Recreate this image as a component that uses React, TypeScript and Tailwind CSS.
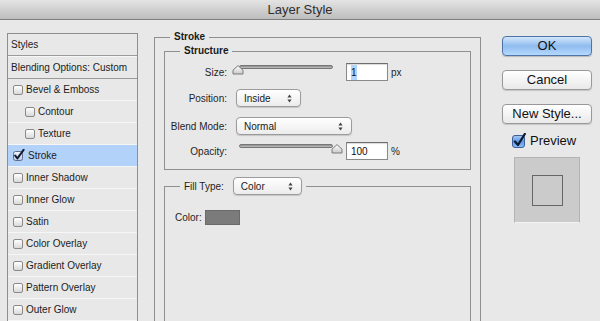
import type { ReactNode } from 'react';

const styleRows = [
  { label: 'Bevel & Emboss', indent: false, checked: false },
  { label: 'Contour', indent: true, checked: false },
  { label: 'Texture', indent: true, checked: false },
  { label: 'Stroke', indent: false, checked: true },
  { label: 'Inner Shadow', indent: false, checked: false },
  { label: 'Inner Glow', indent: false, checked: false },
  { label: 'Satin', indent: false, checked: false },
  { label: 'Color Overlay', indent: false, checked: false },
  { label: 'Gradient Overlay', indent: false, checked: false },
  { label: 'Pattern Overlay', indent: false, checked: false },
  { label: 'Outer Glow', indent: false, checked: false },
];

const SmallCheck = ({ checked }: { checked: boolean }) =>
  checked ? (
    <svg width="12" height="12" viewBox="0 0 12 12" className="-mt-[2px] shrink-0">
      <defs>
        <linearGradient id="sc" x1="0" y1="0" x2="0" y2="1">
          <stop offset="0" stopColor="#f4f8ff" />
          <stop offset="1" stopColor="#b9c9e4" />
        </linearGradient>
      </defs>
      <rect x="0.5" y="2.5" width="9" height="9" rx="2" fill="url(#sc)" stroke="#5d6d8c" />
      <path d="M2.2 6.6 L4.4 9.4 L10.6 0.8" fill="none" stroke="#141b33" strokeWidth="2" strokeLinecap="round" strokeLinejoin="round" />
    </svg>
  ) : (
    <div className="h-[10px] w-[10px] shrink-0 rounded-[2px] border border-[#8a8a8a] bg-gradient-to-b from-white to-[#d9d9d9]" />
  );

const UpDown = () => (
  <svg width="5" height="9" viewBox="0 0 5 9" className="shrink-0">
    <path d="M2.5 0.5 L4.6 3.4 L0.4 3.4 Z" fill="#444" />
    <path d="M2.5 8.5 L4.6 5.6 L0.4 5.6 Z" fill="#444" />
  </svg>
);

const Select = ({ value, width }: { value: string; width: string }) => (
  <div
    className={`flex h-[18px] ${width} items-center justify-between rounded-[4px] border border-[#9b9b9b] bg-gradient-to-b from-white to-[#ececec] pr-[8px] pl-[7px] text-[10px] text-[#1a1a1a] shadow-[0_1px_1px_rgba(0,0,0,0.15)]`}
  >
    <span>{value}</span>
    <UpDown />
  </div>
);

const Thumb = () => (
  <svg width="12" height="10" viewBox="0 0 12 10">
    <defs>
      <linearGradient id="th" x1="0" y1="0" x2="0" y2="1">
        <stop offset="0" stopColor="#ffffff" />
        <stop offset="1" stopColor="#c9c9c9" />
      </linearGradient>
    </defs>
    <path d="M1 9 L1 5.2 L6 0.6 L11 5.2 L11 9 Z" fill="url(#th)" stroke="#7a7a7a" strokeLinejoin="round" />
  </svg>
);

const Slider = ({ at }: { at: 'start' | 'end' }) => (
  <div className="relative mt-[-5px] ml-[5px] h-[10px] w-[112px] shrink-0">
    <div className="absolute top-[0px] left-[7px] h-[4px] w-[94px] rounded-full border border-[#777] bg-gradient-to-b from-[#8a8a8a] to-[#c4c4c4]" />
    <div className={`absolute top-[0px] ${at === 'start' ? 'left-0' : 'left-[99px]'}`}>
      <Thumb />
    </div>
  </div>
);

const NumberBox = ({ children }: { children: ReactNode }) => (
  <div className="ml-[2px] flex h-[18px] w-[42px] items-center border border-[#8a8a8a] border-t-[#6e6e6e] bg-white pl-[4px] text-[10px] text-[#111] shadow-[inset_0_1px_1px_rgba(0,0,0,0.15)]">
    {children}
  </div>
);

const Label = ({ children }: { children: ReactNode }) => (
  <span className="w-[62px] shrink-0 text-right text-[10px] text-[#1e1e1e]">{children}</span>
);

const Button = ({ children, primary }: { children: ReactNode; primary?: boolean }) => (
  <div
    className={
      primary
        ? 'flex h-[20px] items-center justify-center rounded-[4px] border border-[#4e74aa] bg-gradient-to-b from-[#d3e6fb] via-[#8fbcef] to-[#b5d9fd] text-[13px] text-[#111] shadow-[0_1px_1px_rgba(0,0,0,0.2)]'
        : 'flex h-[20px] items-center justify-center rounded-[4px] border border-[#999] bg-gradient-to-b from-white to-[#e9e9e9] text-[13px] text-[#111] shadow-[0_1px_1px_rgba(0,0,0,0.15)]'
    }
  >
    {children}
  </div>
);

export default function App() {
  return (
    <div className="flex h-[321px] w-[600px] flex-col overflow-hidden bg-[#e8e8e8] font-['Liberation_Sans',Arial,sans-serif]">
      <div className="flex h-[20px] shrink-0 items-center justify-center border-b border-[#7e7e7e] bg-gradient-to-b from-[#e4e4e4] to-[#bdbdbd] text-[13px] text-[#2e2e2e]">
        Layer Style
      </div>

      <div className="flex flex-1">
        <div className="mt-[13px] ml-[7px] w-[131px] self-start border border-[#8e8e8e] bg-[#e8e8e8] text-[10px] text-[#1c1c1c]">
          <div className="flex h-[22px] items-center border-b border-[#9a9a9a] pl-[3px]">Styles</div>
          <div className="flex h-[23px] items-center border-t border-b border-t-[#f7f7f7] border-b-[#9a9a9a] pl-[3px]">
            Blending Options: Custom
          </div>
          {styleRows.map((row) => (
            <div
              key={row.label}
              className={`flex h-[22px] items-center gap-[3px] border-b border-[#f6f6f6] ${row.indent ? 'pl-[17px]' : 'pl-[5px]'} ${row.checked ? 'bg-[#b3d2fa]' : ''}`}
            >
              <SmallCheck checked={row.checked} />
              <span>{row.label}</span>
            </div>
          ))}
        </div>

        <fieldset className="mt-[11px] ml-[16px] h-[400px] w-[327px] shrink-0 border border-[#8f8f8f] px-[9px]">
          <legend className="ml-[6px] px-[4px] text-[10px] leading-[12px] font-bold text-[#1a1a1a]">Stroke</legend>

          <fieldset className="mt-[2px] border border-[#8f8f8f] pb-[9px]">
            <legend className="ml-[15px] px-[4px] text-[10px] leading-[12px] font-bold text-[#1a1a1a]">Structure</legend>

            <div className="mt-[6px] flex h-[18px] items-center">
              <Label>Size:</Label>
              <Slider at="start" />
              <NumberBox>
                <span className="bg-[#b3d4fc]">1</span>
              </NumberBox>
              <span className="ml-[3px] text-[10px] text-[#1e1e1e]">px</span>
            </div>

            <div className="mt-[8px] flex h-[18px] items-center">
              <Label>Position:</Label>
              <div className="ml-[9px]">
                <Select value="Inside" width="w-[65px]" />
              </div>
            </div>

            <div className="mt-[10px] flex h-[18px] items-center">
              <Label>Blend Mode:</Label>
              <div className="ml-[9px]">
                <Select value="Normal" width="w-[116px]" />
              </div>
            </div>

            <div className="mt-[7px] flex h-[18px] items-center">
              <Label>Opacity:</Label>
              <Slider at="end" />
              <NumberBox>100</NumberBox>
              <span className="ml-[3px] text-[10px] text-[#1e1e1e]">%</span>
            </div>
          </fieldset>

          <fieldset className="mt-[7px] h-[200px] border border-[#8f8f8f] pl-[10px]">
            <legend className="ml-[5px] px-[4px]">
              <span className="flex items-center text-[10px] text-[#1e1e1e]">
                Fill Type:
                <span className="ml-[9px]">
                  <Select value="Color" width="w-[69px]" />
                </span>
              </span>
            </legend>
            <div className="mt-[15px] flex items-center text-[10px] text-[#1e1e1e]">
              Color:
              <div className="ml-[3px] h-[15px] w-[35px] border border-[#6a6a6a] bg-[#7b7b7b]" />
            </div>
          </fieldset>
        </fieldset>

        <div className="mt-[16px] ml-[21px] flex w-[90px] shrink-0 flex-col self-start">
          <Button primary>OK</Button>
          <div className="mt-[14px]">
            <Button>Cancel</Button>
          </div>
          <div className="mt-[14px]">
            <Button>New Style...</Button>
          </div>
          <div className="mt-[9px] flex h-[15px] items-center pl-[10px]">
            <svg width="14" height="15" viewBox="0 0 14 15" className="shrink-0">
              <defs>
                <linearGradient id="pv" x1="0" y1="0" x2="0" y2="1">
                  <stop offset="0" stopColor="#a9cbf3" />
                  <stop offset="0.5" stopColor="#5d99e6" />
                  <stop offset="1" stopColor="#8cc0fa" />
                </linearGradient>
              </defs>
              <rect x="0.5" y="2.5" width="12" height="12" rx="2.5" fill="url(#pv)" stroke="#3b5f96" />
              <path d="M3 8.6 L6 12 L12.8 1" fill="none" stroke="#0e1a33" strokeWidth="2.3" strokeLinecap="round" strokeLinejoin="round" />
            </svg>
            <span className="ml-[4px] text-[13px] leading-[15px] text-[#111]">Preview</span>
          </div>
          <div className="mt-[9px] ml-[12px] flex h-[66px] w-[66px] items-center justify-center border border-[#b4b4b4] border-b-[#f2f2f2] bg-[#cbcbcb]">
            <div className="h-[31px] w-[31px] border border-[#666]" />
          </div>
        </div>
      </div>
    </div>
  );
}
